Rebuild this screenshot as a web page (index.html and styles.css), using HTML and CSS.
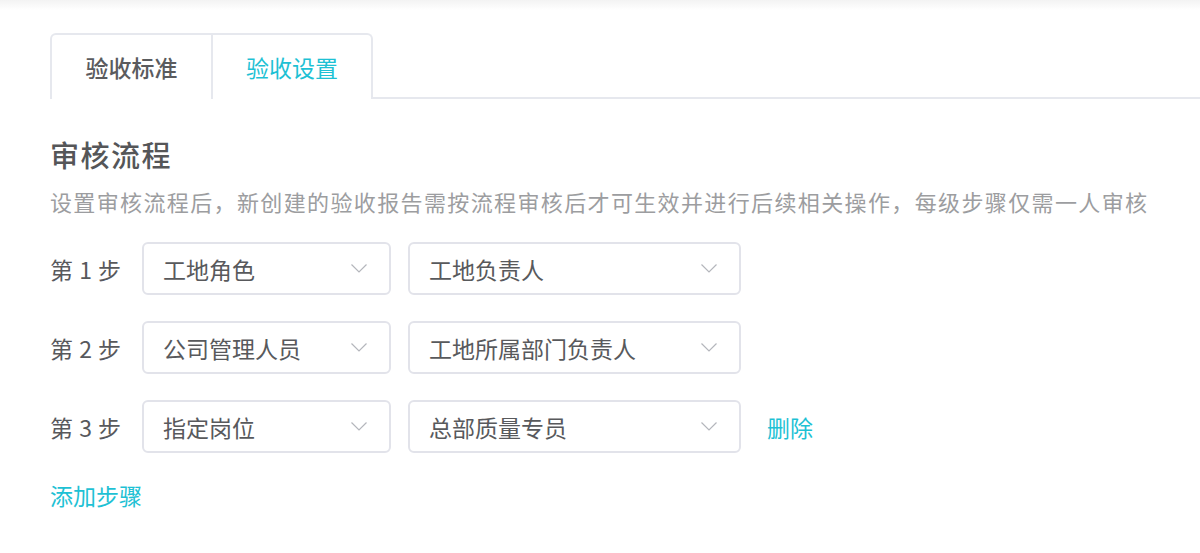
FILE: index.html
```html
<!DOCTYPE html>
<html lang="zh">
<head>
<meta charset="utf-8">
<link rel="stylesheet" href="styles.css">
</head>
<body>
<div class="topshade"></div>
<div class="page">
  <div class="tabs">
    <div class="tab">验收标准</div>
    <div class="tab active">验收设置</div>
  </div>
  <h2 class="title">审核流程</h2>
  <p class="desc">设置审核流程后，新创建的验收报告需按流程审核后才可生效并进行后续相关操作，每级步骤仅需一人审核</p>
  <div class="steps">
    <div class="step">
      <span class="label">第 1 步</span>
      <div class="select s1"><span>工地角色</span><svg class="chev" viewBox="0 0 16 9"><path d="M0.5 0.5 L8 8 L15.5 0.5" fill="none" stroke="#b4b6bc" stroke-width="1.2"/></svg></div>
      <div class="select s2"><span>工地负责人</span><svg class="chev" viewBox="0 0 16 9"><path d="M0.5 0.5 L8 8 L15.5 0.5" fill="none" stroke="#b4b6bc" stroke-width="1.2"/></svg></div>
    </div>
    <div class="step">
      <span class="label">第 2 步</span>
      <div class="select s1"><span>公司管理人员</span><svg class="chev" viewBox="0 0 16 9"><path d="M0.5 0.5 L8 8 L15.5 0.5" fill="none" stroke="#b4b6bc" stroke-width="1.2"/></svg></div>
      <div class="select s2"><span>工地所属部门负责人</span><svg class="chev" viewBox="0 0 16 9"><path d="M0.5 0.5 L8 8 L15.5 0.5" fill="none" stroke="#b4b6bc" stroke-width="1.2"/></svg></div>
    </div>
    <div class="step">
      <span class="label">第 3 步</span>
      <div class="select s1"><span>指定岗位</span><svg class="chev" viewBox="0 0 16 9"><path d="M0.5 0.5 L8 8 L15.5 0.5" fill="none" stroke="#b4b6bc" stroke-width="1.2"/></svg></div>
      <div class="select s2"><span>总部质量专员</span><svg class="chev" viewBox="0 0 16 9"><path d="M0.5 0.5 L8 8 L15.5 0.5" fill="none" stroke="#b4b6bc" stroke-width="1.2"/></svg></div>
      <a class="link del">删除</a>
    </div>
  </div>
  <a class="link add">添加步骤</a>
</div>
</body>
</html>
```
FILE: styles.css
```css
html, body {
  margin: 0;
  padding: 0;
  background: #fff;
}
body {
  font-family: "Noto Sans CJK SC", "Noto Sans", sans-serif;
  color: #58595c;
  position: relative;
  height: 553px;
  overflow: hidden;
}
.topshade {
  position: absolute;
  left: 0; right: 0; top: 0;
  height: 10px;
  background: linear-gradient(#f3f3f3, rgba(255,255,255,0));
}
.page {
  padding: 33px 0 0 50px;
}
.tabs {
  display: flex;
  border-bottom: 2px solid #e6e8ee;
  height: 64px;
}
.tab {
  width: 159px;
  height: 64px;
  border: 2px solid #e6e8ee;
  border-bottom: none;
  box-sizing: content-box;
  display: flex;
  align-items: center;
  justify-content: center;
  font-size: 23px;
  font-weight: 500;
  color: #5a5b5e;
  margin-bottom: -2px;
  background: #fff;
}
.tab:first-child {
  border-radius: 6px 0 0 0;
}
.tab + .tab {
  border-left: none;
  border-radius: 0 6px 0 0;
  width: 158px;
}
.tab.active {
  color: #1ec1d4;
  font-weight: 400;
}
.title {
  margin: 35px 0 0;
  font-size: 29px;
  font-weight: 500;
  letter-spacing: 1.5px;
  line-height: 40px;
  color: #555658;
}
.desc {
  margin: 12px 0 0;
  font-size: 22px;
  letter-spacing: 1.37px;
  line-height: 30px;
  color: #9c9da0;
  white-space: nowrap;
}
.steps {
  margin-top: 26px;
  display: flex;
  flex-direction: column;
  gap: 26px;
}
.step {
  display: flex;
  align-items: center;
  height: 53px;
}
.label {
  width: 92px;
  font-size: 23px;
  word-spacing: 1px;
  color: #58595c;
}
.select {
  border: 2px solid #e2e3ea;
  border-radius: 6px;
  display: flex;
  align-items: center;
  justify-content: space-between;
  padding: 0 22px 0 19px;
  box-sizing: border-box;
  height: 53px;
  font-size: 23px;
  color: #58595c;
}
.s1 { width: 249px; }
.s2 { width: 333px; margin-left: 17px; }
.chev {
  width: 16px;
  height: 9px;
}
.link {
  color: #1ec1d4;
  font-size: 23px;
  cursor: pointer;
}
.del {
  margin-left: 26px;
}
.add {
  display: inline-block;
  margin-top: 25px;
}
```
